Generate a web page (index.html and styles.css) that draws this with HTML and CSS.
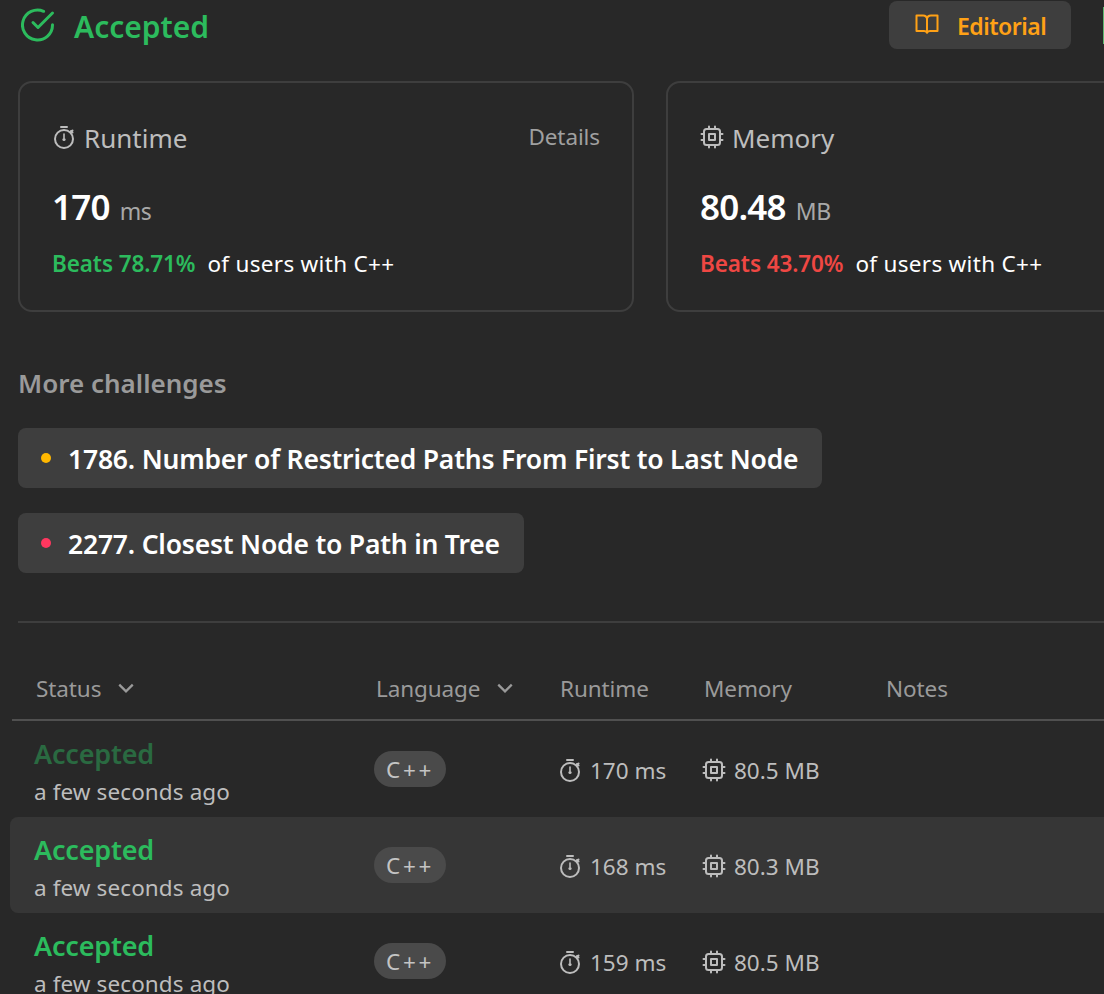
FILE: index.html
```html
<!DOCTYPE html>
<html lang="en">
<head>
<meta charset="utf-8">
<title>Accepted</title>
<link rel="stylesheet" href="styles.css">
</head>
<body>
<svg class="defs" width="0" height="0" aria-hidden="true">
  <symbol id="timer" viewBox="0 0 24 24" fill="none" stroke="currentColor" stroke-width="2" stroke-linecap="round">
    <circle cx="12" cy="14" r="9"/><path d="M9 2h6M19 6l1.5 1.5M20.5 5.5l-2 2"/><path d="M12 9v4" stroke-width="1.6"/><circle cx="12" cy="14.5" r="1.6" fill="currentColor" stroke="none"/>
  </symbol>
  <symbol id="chip" viewBox="0 0 24 24" fill="none" stroke="currentColor" stroke-width="2" stroke-linecap="round" stroke-linejoin="round">
    <rect x="4" y="4" width="16" height="16" rx="2.5"/><rect x="9" y="9" width="6" height="6"/><path d="M9 1.5V4M15 1.5V4M9 20v2.500M15 20v2.500M1.500 9H4M1.500 15H4M20 9h2.500M20 15h2.500"/>
  </symbol>
</svg>
<main class="page">
  <header class="top">
    <div class="verdict">
      <svg class="check" viewBox="0 0 34 34" fill="none" stroke="currentColor" stroke-width="3" stroke-linecap="round" stroke-linejoin="round"><path d="M31.500 16.800V17a15 15 0 1 1-8.900-13.700"/><path d="M31.500 5 17 19.500l-5-5"/></svg>
      <span class="verdict-text">Accepted</span>
    </div>
    <button class="editorial">
      <svg viewBox="0 0 24 24" fill="none" stroke="currentColor" stroke-width="2" stroke-linejoin="round"><path d="M1.500 3.500H8a4 4 0 0 1 4 3.500 4 4 0 0 1 4-3.500h6.500v15.500H15c-1.200 0-2.400.4-3 1.800-.6-1.400-1.800-1.800-3-1.800H1.500z"/><path d="M12 7v13"/></svg>
      <span>Editorial</span>
    </button>
    <span class="sliver"></span>
  </header>

  <section class="cards">
    <article class="card">
      <div class="card-head">
        <svg class="ico"><use href="#timer"/></svg><span class="card-title">Runtime</span>
        <span class="details">Details</span>
      </div>
      <div class="value"><strong>170</strong><span class="unit">ms</span></div>
      <div class="beats"><span class="good">Beats 78.71%</span><span>of users with C++</span></div>
    </article>
    <article class="card">
      <div class="card-head">
        <svg class="ico"><use href="#chip"/></svg><span class="card-title">Memory</span>
      </div>
      <div class="value"><strong>80.48</strong><span class="unit">MB</span></div>
      <div class="beats"><span class="bad">Beats 43.70%</span><span>of users with C++</span></div>
    </article>
  </section>

  <h2 class="more">More challenges</h2>
  <div class="challenges">
    <a class="challenge"><i class="dot medium"></i><span class="challenge-name">1786. Number of Restricted Paths From First to Last Node</span></a>
    <a class="challenge"><i class="dot hard"></i><span class="challenge-name">2277. Closest Node to Path in Tree</span></a>
  </div>

  <hr class="rule">

  <div class="table">
    <div class="thead">
      <div class="c-status">Status<svg class="chev" viewBox="0 0 16 16"><path d="M2 5l6 6 6-6"/></svg></div>
      <div class="c-lang">Language<svg class="chev" viewBox="0 0 16 16"><path d="M2 5l6 6 6-6"/></svg></div>
      <div class="c-run">Runtime</div>
      <div class="c-mem">Memory</div>
      <div class="c-notes">Notes</div>
    </div>
    <div class="row">
      <div class="c-status"><div class="st dim">Accepted</div><div class="ago">a few seconds ago</div></div>
      <div class="c-lang"><span class="pill">C++</span></div>
      <div class="c-run metric"><svg class="ico2"><use href="#timer"/></svg>170 ms</div>
      <div class="c-mem metric"><svg class="ico2"><use href="#chip"/></svg>80.5 MB</div>
      <div class="c-notes"></div>
    </div>
    <div class="row hover">
      <div class="c-status"><div class="st">Accepted</div><div class="ago">a few seconds ago</div></div>
      <div class="c-lang"><span class="pill">C++</span></div>
      <div class="c-run metric"><svg class="ico2"><use href="#timer"/></svg>168 ms</div>
      <div class="c-mem metric"><svg class="ico2"><use href="#chip"/></svg>80.3 MB</div>
      <div class="c-notes"></div>
    </div>
    <div class="row">
      <div class="c-status"><div class="st">Accepted</div><div class="ago">a few seconds ago</div></div>
      <div class="c-lang"><span class="pill">C++</span></div>
      <div class="c-run metric"><svg class="ico2"><use href="#timer"/></svg>159 ms</div>
      <div class="c-mem metric"><svg class="ico2"><use href="#chip"/></svg>80.5 MB</div>
      <div class="c-notes"></div>
    </div>
  </div>
</main>
</body>
</html>
```

FILE: styles.css
```css
* { box-sizing: border-box; }
html, body { margin: 0; height: 994px; overflow: hidden; background: #282828; }
body { font-family: "Noto Sans", "Open Sans", sans-serif; color: #fff; }
.defs { position: absolute; }
.page { width: 1104px; height: 994px; overflow: hidden; }

.top { display: flex; align-items: center; height: 51px; padding: 0 0 0 21px; }
.verdict { display: flex; align-items: center; gap: 19px; color: #2cbb5d; font-size: 30px; font-weight: 600; letter-spacing: 0; }
.verdict-text { margin-top: 2px; }
.check { width: 34px; height: 34px; margin-bottom: 1px; }
.editorial { display: flex; align-items: center; gap: 18px; width: 182px; height: 48px; margin-left: auto; margin-bottom: 1px; padding: 0 0 0 26px; border: 0; border-radius: 8px; background: #3e3e3e; color: #ffa116; font: 600 23px "Noto Sans", sans-serif; letter-spacing: -0.5px; }
.editorial span { margin-top: 2px; }
.editorial svg { width: 24px; height: 24px; margin-bottom: 2px; }
.sliver { width: 1px; height: 37px; margin-left: 32px; background: #5cb870; }

.cards { display: flex; gap: 32px; margin: 30px 0 0 18px; }
.card { flex: 0 0 616px; height: 231px; padding: 40px 32px 0 32px; border: 2px solid #3e3e3e; border-radius: 14px; }
.card-head { display: flex; align-items: center; height: 30px; }
.ico { width: 24px; height: 24px; color: #bdbdbd; margin-right: 8px; margin-top: -2px; }
.card-title { color: #bdbdbd; font-size: 26px; letter-spacing: 0; }
.details { margin-left: auto; color: #a0a0a0; font-size: 22.500px; letter-spacing: -0.1px; margin-top: -3px; }
.value { display: flex; align-items: baseline; gap: 9px; margin-top: 30px; height: 48px; }
.value strong { font-size: 35px; font-weight: 600; letter-spacing: -0.8px; }
.unit { color: #a8a8a8; font-size: 23px; letter-spacing: -0.4px; margin-left: 1px; }
.beats { display: flex; gap: 12px; margin-top: 17px; font-size: 22.500px; letter-spacing: 0.3px; }
.good { color: #2cbb5d; font-weight: 600; letter-spacing: -0.1px; }
.bad { color: #ef4743; font-weight: 600; letter-spacing: -0.1px; }

.more { margin: 54px 0 0 18px; color: #9a9a9a; font-size: 26px; font-weight: 600; letter-spacing: 0; line-height: 34px; }
.challenges { display: flex; flex-direction: column; align-items: flex-start; gap: 25px; margin: 28px 0 0 18px; }
.challenge { display: flex; align-items: center; gap: 17px; height: 60px; padding: 0 24px 0 23px; border-radius: 8px; background: #3e3e3e; font-size: 26.500px; font-weight: 600; letter-spacing: -0.2px; }
.challenge-name { margin-top: 2px; }
.dot { flex: none; width: 10px; height: 10px; border-radius: 50%; }
.medium { background: #ffb800; }
.hard { background: #ff375f; }

.rule { height: 2px; margin: 48px 0 0 18px; border: 0; background: #3e3e3e; }

.table { margin-top: 0; }
.thead { display: flex; align-items: center; height: 98px; margin-left: 12px; padding-top: 34px; border-bottom: 2px solid #505050; color: #9a9a9a; font-size: 22.500px; letter-spacing: -0.1px; }
.thead .c-status { width: 364px; padding-left: 24px; }
.thead .c-lang { width: 184px; }
.thead .c-run { width: 144px; }
.thead .c-mem { width: 182px; }
.c-status, .c-lang { display: flex; }
.chev { width: 18px; height: 18px; margin-left: 16px; fill: none; stroke: #9a9a9a; stroke-width: 2; align-self: center; }

.row { display: flex; align-items: center; height: 96px; margin-left: 10px; border-radius: 8px 0 0 8px; font-size: 22.500px; letter-spacing: 0; }
.row.hover { background: #363636; }
.row .c-status { flex-direction: column; width: 364px; padding-left: 24px; padding-top: 8px; }
.row .c-lang { width: 184px; }
.row .c-run { width: 144px; }
.row .c-mem { width: 182px; }
.st { color: #2cbb5d; font-size: 27px; font-weight: 600; line-height: 36px; letter-spacing: -0.2px; }
.st.dim { color: #2a6a41; }
.ago { color: #bdbdbd; line-height: 39px; letter-spacing: 0.1px; }
.pill { display: inline-flex; align-items: center; height: 36px; padding: 0 12px; border-radius: 18px; background: #4a4a4a; color: #c4c4c4; letter-spacing: 2.700px; }
.metric { display: flex; align-items: center; color: #bdbdbd; padding-top: 2px; }
.ico2 { width: 24px; height: 24px; margin-right: 8px; color: #bdbdbd; }
```
